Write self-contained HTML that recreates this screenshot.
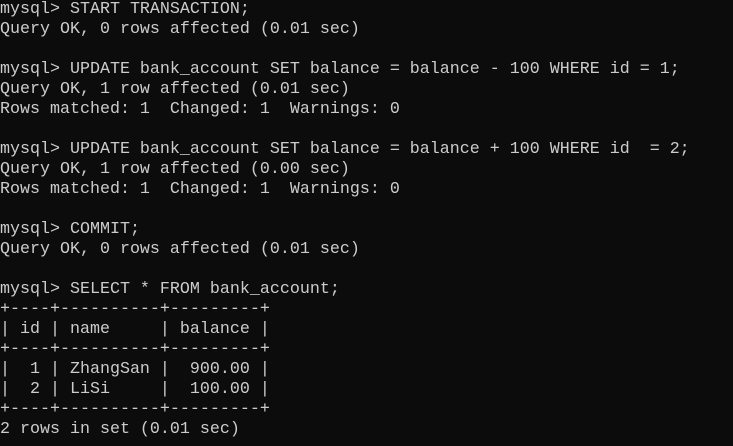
<!DOCTYPE html>
<html><head><style>
html,body{margin:0;padding:0;background:#0c0c0c;width:733px;height:446px;overflow:hidden}
pre{margin:0;position:absolute;left:0;top:0px;font-family:"Liberation Mono",monospace;font-size:16.67px;line-height:20px;color:#cccccc;white-space:pre}
</style></head><body><pre>mysql&gt; START TRANSACTION;
Query OK, 0 rows affected (0.01 sec)

mysql&gt; UPDATE bank_account SET balance = balance - 100 WHERE id = 1;
Query OK, 1 row affected (0.01 sec)
Rows matched: 1  Changed: 1  Warnings: 0

mysql&gt; UPDATE bank_account SET balance = balance + 100 WHERE id  = 2;
Query OK, 1 row affected (0.00 sec)
Rows matched: 1  Changed: 1  Warnings: 0

mysql&gt; COMMIT;
Query OK, 0 rows affected (0.01 sec)

mysql&gt; SELECT * FROM bank_account;
+----+----------+---------+
| id | name     | balance |
+----+----------+---------+
|  1 | ZhangSan |  900.00 |
|  2 | LiSi     |  100.00 |
+----+----------+---------+
2 rows in set (0.01 sec)</pre></body></html>
